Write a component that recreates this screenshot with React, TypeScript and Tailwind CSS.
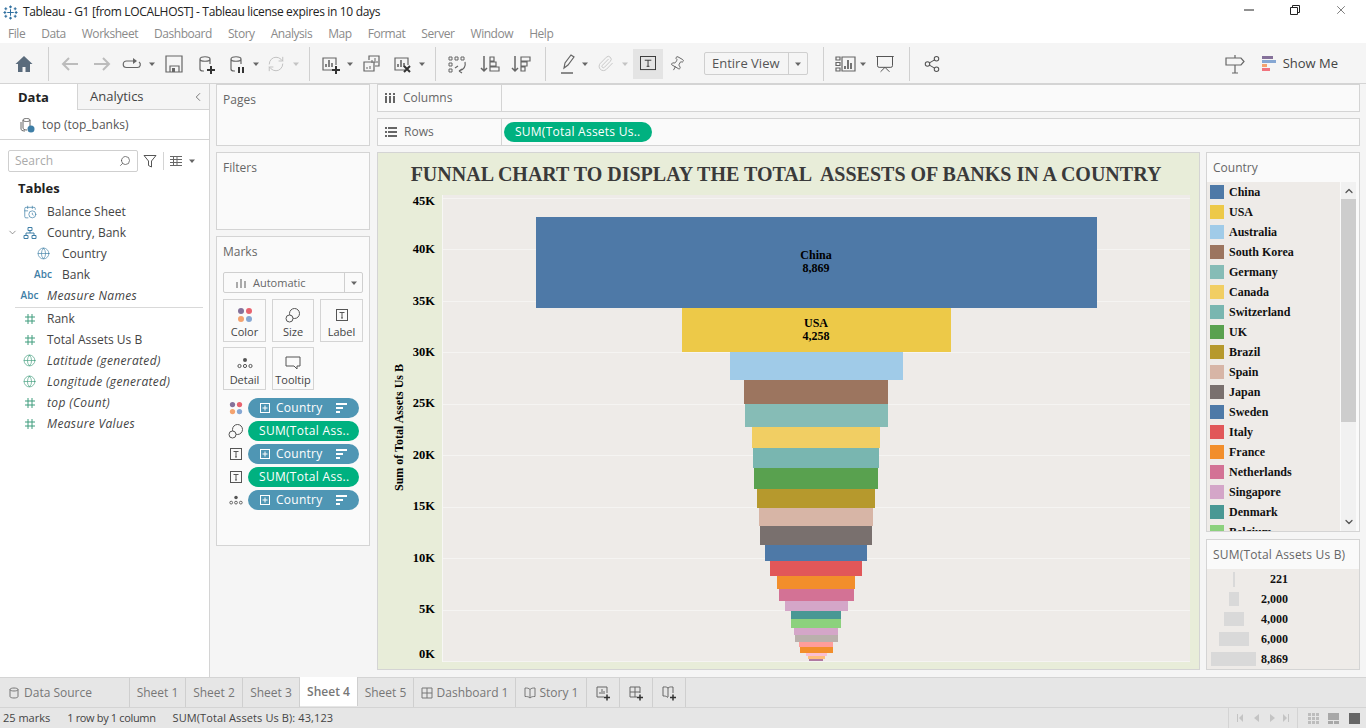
import { ReactNode } from "react"
import { CalendarClock, ChevronDown, ChevronLeft, ChevronUp, Globe, Paperclip, Pin, Presentation, RefreshCw, Search, Share2, X } from "lucide-react"

const bars = [
  { name: "China", bar: "w-[561px] h-[91px] pb-[2px] bg-[#4e79a7]", swatch: "bg-[#4e79a7]", value: "8,869" },
  { name: "USA", bar: "w-[269px] h-[44px] bg-[#edc948]", swatch: "bg-[#edc948]", value: "4,258" },
  { name: "Australia", bar: "w-[173px] h-[28px] bg-[#a0cbe8]", swatch: "bg-[#a0cbe8]" },
  { name: "South Korea", bar: "w-[144px] h-[24px] bg-[#9c755f]", swatch: "bg-[#9c755f]" },
  { name: "Germany", bar: "w-[143px] h-[23px] bg-[#86bcb6]", swatch: "bg-[#86bcb6]" },
  { name: "Canada", bar: "w-[128px] h-[21px] bg-[#f1ce63]", swatch: "bg-[#f1ce63]" },
  { name: "Switzerland", bar: "w-[126px] h-[20px] bg-[#79b6b0]", swatch: "bg-[#79b6b0]" },
  { name: "UK", bar: "w-[124px] h-[21px] bg-[#59a14f]", swatch: "bg-[#59a14f]" },
  { name: "Brazil", bar: "w-[118px] h-[19px] bg-[#b6992d]", swatch: "bg-[#b6992d]" },
  { name: "Spain", bar: "w-[114px] h-[18px] bg-[#d7b5a6]", swatch: "bg-[#d7b5a6]" },
  { name: "Japan", bar: "w-[112px] h-[19px] bg-[#79706e]", swatch: "bg-[#79706e]" },
  { name: "Sweden", bar: "w-[102px] h-[16px] bg-[#4e79a7]", swatch: "bg-[#4e79a7]" },
  { name: "Italy", bar: "w-[92px] h-[15px] bg-[#e15759]", swatch: "bg-[#e15759]" },
  { name: "France", bar: "w-[78px] h-[13px] bg-[#f28e2b]", swatch: "bg-[#f28e2b]" },
  { name: "Netherlands", bar: "w-[75px] h-[12px] bg-[#d37295]", swatch: "bg-[#d37295]" },
  { name: "Singapore", bar: "w-[63px] h-[10px] bg-[#d4a6c8]", swatch: "bg-[#d4a6c8]" },
  { name: "Denmark", bar: "w-[50px] h-[8px] bg-[#499894]", swatch: "bg-[#499894]" },
  { name: "Belgium", bar: "w-[50px] h-[9px] bg-[#8cd17d]", swatch: "bg-[#8cd17d]" },
  { name: "", bar: "w-[44px] h-[7px] bg-[#d4a6c8]", swatch: "" },
  { name: "", bar: "w-[43px] h-[7px] bg-[#bab0ac]", swatch: "" },
  { name: "", bar: "w-[34px] h-[5px] bg-[#ff9d9a]", swatch: "" },
  { name: "", bar: "w-[33px] h-[6px] bg-[#f28e2b]", swatch: "" },
  { name: "", bar: "w-[21px] h-[3px] bg-[#fabfd2]", swatch: "" },
  { name: "", bar: "w-[17px] h-[3px] bg-[#ffbe7d]", swatch: "" },
  { name: "", bar: "w-[14px] h-[2px] bg-[#b07aa1]", swatch: "" },
]

const ticks = [
  { label: "45K", nudge: "translate-y-[3px]" },
  { label: "40K", nudge: "" },
  { label: "35K", nudge: "" },
  { label: "30K", nudge: "" },
  { label: "25K", nudge: "" },
  { label: "20K", nudge: "" },
  { label: "15K", nudge: "" },
  { label: "10K", nudge: "" },
  { label: "5K", nudge: "" },
  { label: "0K", nudge: "-translate-y-[7px]" },
]

const sizeRows = [
  { value: "221", bar: "w-[2px] h-[15px]" },
  { value: "2,000", bar: "w-[10px] h-[14px]" },
  { value: "4,000", bar: "w-[20px] h-[14px]" },
  { value: "6,000", bar: "w-[30px] h-[14px]" },
  { value: "8,869", bar: "w-[45px] h-[14px]" },
]

const Svg = ({ children, className = "" }: { children: ReactNode; className?: string }) => (
  <svg viewBox="0 0 24 24" fill="none" stroke="#666" strokeWidth="1.2" className={`w-6 h-6 shrink-0 ${className}`}>
    {children}
  </svg>
)

const Sep = ({ className = "" }: { className?: string }) => (
  <div className={`w-px h-[34px] bg-[#d0d0d0] shrink-0 ${className}`} />
)

const Caret = ({ className = "", light = false }: { className?: string; light?: boolean }) => (
  <svg viewBox="0 0 8 8" className={`w-2 h-2 shrink-0 ${className}`}>
    <path d="M1 2.500h6L4 6z" fill={light ? "#c4c4c4" : "#666"} />
  </svg>
)

const Plus = ({ x, y }: { x: number; y: number }) => (
  <path d={`M${x - 4} ${y}h8M${x} ${y - 4}v8`} stroke="#333" strokeWidth="2" />
)

const Cylinder = () => (
  <path d="M7 7c0-3 10-3 10 0v5M7 7c0 3 10 3 10 0M7 7v10c0 1 1 2 3 2h1" />
)

const ChartBox = ({ mark }: { mark?: ReactNode }) => (
  <>
    <path d="M15 18H5V6h13v7" />
    <path d="M8 15v-3M11 15V8M14 15v-4" strokeWidth="1.6" />
    {mark}
  </>
)

const LabelIcon = ({ className = "" }: { className?: string }) => (
  <svg viewBox="0 0 14 14" fill="none" stroke="#555" className={`w-[14px] h-[14px] shrink-0 ${className}`}>
    <rect x="1.5" y="1.5" width="11" height="11" />
    <path d="M4.500 4.500h5M7 4.500v5.500M6 10h2" />
  </svg>
)

const ColorIcon = ({ className = "" }: { className?: string }) => (
  <svg viewBox="0 0 16 16" className={`w-4 h-4 shrink-0 ${className}`}>
    <circle cx="4" cy="4" r="3" fill="#85719a" />
    <circle cx="12" cy="4" r="3" fill="#e8636f" />
    <circle cx="4" cy="12" r="3" fill="#f4a36f" />
    <circle cx="12" cy="12" r="3" fill="#86a7d3" />
  </svg>
)

const SizeIcon = ({ className = "" }: { className?: string }) => (
  <svg viewBox="0 0 16 16" fill="none" stroke="#555" className={`w-4 h-4 shrink-0 ${className}`}>
    <circle cx="9.500" cy="6.500" r="5" />
    <circle cx="4.500" cy="11.500" r="3.500" fill="#fafafa" />
  </svg>
)

const DetailIcon = ({ className = "" }: { className?: string }) => (
  <svg viewBox="0 0 16 12" fill="none" stroke="#555" className={`w-4 h-3 shrink-0 ${className}`}>
    <circle cx="8" cy="3" r="2" fill="#555" stroke="none" />
    <circle cx="2.500" cy="9" r="1.600" />
    <circle cx="8" cy="9" r="1.600" />
    <circle cx="13.500" cy="9" r="1.600" />
  </svg>
)

const MarkButton = ({ icon, label, width = "w-[43px]" }: { icon: ReactNode; label: string; width?: string }) => (
  <div className={`${width} h-[43px] border border-[#d4d4d4] flex flex-col items-center`}>
    <div className="h-[25px] flex items-center justify-center pt-1">{icon}</div>
    <span className="text-[11px] leading-[14px] text-[#444]">{label}</span>
  </div>
)

const MarkPill = ({ icon, green, label }: { icon: ReactNode; green?: boolean; label: string }) => (
  <div className="flex items-center h-[20px]">
    <div className="w-[25px] flex justify-center pl-[1px]">{icon}</div>
    {green ? (
      <div className="w-[111px] h-[20px] rounded-full bg-[#00b180] text-white text-[12px] tracking-[0.3px] pl-[11px] flex items-center whitespace-nowrap">{label}</div>
    ) : (
      <div className="w-[111px] h-[20px] rounded-full bg-[#4f96b4] text-white text-[12px] tracking-[0.25px] flex items-center pl-[12px] pr-[12px]">
        <svg viewBox="0 0 10 10" fill="none" stroke="#fff" className="w-[10px] h-[10px] shrink-0">
          <rect x=".5" y=".5" width="9" height="9" />
          <path d="M2.500 5h5M5 2.500v5" />
        </svg>
        <span className="ml-[6px]">{label}</span>
        <svg viewBox="0 0 11 10" fill="#fff" className="w-[11px] h-[10px] ml-auto">
          <path d="M0 0h11v2H0zM0 4h7v2H0zM0 8h4v2H0z" />
        </svg>
      </div>
    )}
  </div>
)

const Hash = () => (
  <svg viewBox="0 0 12 12" fill="none" stroke="#3f9c7c" className="w-3 h-3">
    <path d="M4 1v10M8 1v10M1 4h10M1 8h10" />
  </svg>
)

const FieldRow = ({ icon, label, italic, sub }: { icon: ReactNode; label: string; italic?: boolean; sub?: boolean }) => (
  <div className={`flex items-center h-[21px] text-[12px] text-[#444] ${italic ? "italic tracking-[0.35px]" : ""}`}>
    <div className={`flex justify-center shrink-0 ${sub ? "w-[62px] pl-[24px] pr-[0px]" : "w-[47px] pl-[12px]"}`}>{icon}</div>
    <span className="whitespace-nowrap">{label}</span>
  </div>
)

const Abc = () => <span className="text-[10px] font-semibold tracking-normal text-[#3e7ea6] not-italic">Abc</span>

const Tab = ({ label, className = "", icon }: { label: string; className?: string; icon?: ReactNode }) => (
  <div className={`h-full border-r border-[#cfcfcf] flex items-center justify-center gap-[4px] text-[12px] text-[#777] whitespace-nowrap ${className}`}>
    {icon}
    {label}
  </div>
)

const TabAdd = ({ kind }: { kind: "sheet" | "dash" | "story" }) => (
  <div className="w-[33px] h-full border-r border-[#cfcfcf] flex items-center justify-center">
    <svg viewBox="0 0 16 16" fill="none" stroke="#666" className="w-4 h-4">
      {kind === "sheet" && <path d="M9 12H2V2h10v6M5 9V7M7 9V4M9 9V6" />}
      {kind === "dash" && <path d="M9 12H2V2h10v6M7 2v10M2 7h10" />}
      {kind === "story" && <path d="M7 3C5 1.500 4 2 2 2v9c2 0 3 0 5 1.500M7 3c2-1.500 3-1 5-1v6M7 3v9" />}
      <path d="M9 12.500h6M12 9.500v6" stroke="#333" strokeWidth="1.500" />
    </svg>
  </div>
)

const App = () => {
  return (
    <div className="w-[1366px] h-[728px] overflow-hidden flex flex-col bg-[#f5f5f5] font-['Open_Sans',sans-serif]">
      {/* title bar */}
      <div className="h-[24px] bg-white flex items-center shrink-0">
        <svg viewBox="0 0 16 16" stroke="#2f6f9f" fill="none" strokeWidth="1.100" className="w-[15px] h-[15px] ml-[3px]">
          <path d="M8 4.500v7M4.500 8h7M8 .5v3M6.500 2h3M8 12.500v3M6.500 14h3M.5 8h3M2 6.500v3M12.500 8h3M14 6.500v3M3 2.500v3M1.500 4h3M13 2.500v3M11.500 4h3M3 10.500v3M1.500 12h3M13 10.500v3M11.500 12h3" />
        </svg>
        <span className="ml-[5px] text-[12px] tracking-[-0.33px] text-[#222] whitespace-nowrap">Tableau - G1 [from LOCALHOST] - Tableau license expires in 10 days</span>
        <svg viewBox="0 0 10 10" stroke="#222" className="w-[10px] h-[10px] ml-auto -translate-y-[2px]">
          <path d="M0 5h10" />
        </svg>
        <svg viewBox="0 0 10 10" fill="none" stroke="#222" className="w-[10px] h-[10px] ml-[36px] -translate-y-[2px]">
          <path d="M.5 2.500h7v7h-7zM2.500 2.500v-2h7v7h-2" />
        </svg>
        <X size={14} strokeWidth={1} color="#222" className="ml-[34px] mr-[18px] -translate-y-[2px]" />
      </div>

      {/* menu bar */}
      <div className="h-[19px] bg-white flex items-center shrink-0 pl-[8px] text-[12px] tracking-[-0.45px] text-[#8a8a8a] gap-[16px]">
        {["File", "Data", "Worksheet", "Dashboard", "Story", "Analysis", "Map", "Format", "Server", "Window", "Help"].map((m) => (
          <span key={m}>{m}</span>
        ))}
      </div>

      {/* toolbar */}
      <div className="h-[41px] shrink-0 flex items-center pl-3 pr-[28px]">
        <Svg>
          <path d="M12 4L3.500 12H6v8h4.500v-5h3v5H18v-8h2.500z" fill="#5a6b7c" stroke="none" />
        </Svg>
        <Sep className="ml-3" />
        <Svg className="ml-[9px]">
          <path d="M20 12H5M11 6l-6 6 6 6" stroke="#bcbcbc" strokeWidth="2" />
        </Svg>
        <Svg className="ml-2">
          <path d="M4 12h15M13 6l6 6-6 6" stroke="#bcbcbc" strokeWidth="2" />
        </Svg>
        <Svg className="ml-[6px]">
          <path d="M14 9H6.500a3 3 0 0 0 0 6.500h11a3 3 0 0 0 1.500-5.500" />
          <path d="M13 6l4 3-4 3z" fill="#666" stroke="none" />
        </Svg>
        <Caret className="ml-1" />
        <Svg className="ml-[6px]">
          <path d="M4 4h16v16H4zM8 20v-6h9v6" />
          <path d="M10 16h3v4h-3z" fill="#666" stroke="none" />
        </Svg>
        <Svg className="ml-[7px]">
          <Cylinder />
          <Plus x={18} y={18} />
        </Svg>
        <Svg className="ml-[7px]">
          <Cylinder />
          <path d="M15 15v6M19 15v6" stroke="#333" strokeWidth="2" />
        </Svg>
        <Caret className="ml-1" />
        <div className="ml-1 w-6 flex justify-center">
          <RefreshCw size={18} strokeWidth={1.3} color="#c0c0c0" />
        </div>
        <Caret light className="ml-1" />
        <Sep className="ml-[9px]" />
        <Svg className="ml-2">
          <ChartBox mark={<Plus x={18} y={18} />} />
        </Svg>
        <Caret className="ml-1" />
        <Svg className="ml-[5px]">
          <path d="M10 8V4h10v10h-4M5 10h10v9H5z" />
          <path d="M13 11V8M16 11V6M18 11V9M8 17v-2M11 17v-3" strokeWidth="1" />
        </Svg>
        <Svg className="ml-[7px]">
          <ChartBox mark={<path d="M14 14l6 6M20 14l-6 6" stroke="#333" strokeWidth="2" />} />
        </Svg>
        <Caret className="ml-1" />
        <Sep className="ml-[9px]" />
        <Svg className="ml-[9px]">
          <path d="M4 5h3v3H4zM10 5h3v3h-3zM16 5h3v3h-3zM4 11h3v3H4zM4 17h3v3H4z" strokeWidth="1" />
          <path d="M20 10c1 4-1 8-6 9M14 19l3-2M14 19l3 2M10 16l3-2" />
        </Svg>
        <Svg className="ml-[9px]">
          <path d="M6 4v15M3 16l3 3 3-3" strokeWidth="1.500" />
          <path d="M12 5h4v4h-4zM12 10h6v4h-6zM12 15h9v4h-9z" />
        </Svg>
        <Svg className="ml-[7px]">
          <path d="M6 4v15M3 16l3 3 3-3" strokeWidth="1.500" />
          <path d="M12 5h9v4h-9zM12 10h6v4h-6zM12 15h4v4h-4z" />
        </Svg>
        <Sep className="ml-3" />
        <Svg className="ml-[10px]">
          <path d="M8 16l1-5 6-8 3 2-6 8zM8 16l4-3" />
          <path d="M5 21h12" strokeWidth="1.500" />
        </Svg>
        <Caret className="ml-[1px]" />
        <div className="ml-1 w-6 flex justify-center">
          <Paperclip size={17} strokeWidth={1.3} color="#c4c4c4" />
        </div>
        <Caret light className="ml-1" />
        <div className="ml-1 w-[30px] h-[30px] bg-[#e4e4e4] flex items-center justify-center">
          <svg viewBox="0 0 18 16" fill="none" stroke="#333" className="w-[17px] h-[15px]">
            <rect x=".5" y=".5" width="16" height="14" />
            <path d="M5 4.500h7M8.500 4.500v6.500M7 11h3" />
          </svg>
        </div>
        <div className="ml-[2px] w-6 flex justify-center">
          <Pin size={16} strokeWidth={1.2} color="#555" className="rotate-[30deg]" />
        </div>
        <div className="ml-[15px] w-[104px] h-[23px] border border-[#cfcfcf] rounded-[2px] flex items-center text-[13px] text-[#555]">
          <span className="w-[84px] pl-[7px] border-r border-[#cfcfcf] whitespace-nowrap leading-[21px]">Entire View</span>
          <Caret className="ml-[5px]" />
        </div>
        <Sep className="ml-[15px]" />
        <Svg className="ml-[10px]">
          <path d="M2 5h4v3H2zM2 10.500h4v3H2zM2 16h4v3H2zM8 5h13v14H8z" />
          <path d="M11 17v-3M14 17V8M17 17v-6" strokeWidth="1.800" />
        </Svg>
        <Caret className="ml-[1px]" />
        <div className="ml-[6px] w-6 flex justify-center">
          <Presentation size={20} strokeWidth={1.2} color="#555" />
        </div>
        <Sep className="ml-3" />
        <div className="ml-[10px] w-6 flex justify-center">
          <Share2 size={18} strokeWidth={1.4} color="#555" />
        </div>
        <Svg className="ml-auto">
          <path d="M3 6h15l3 3.500-3 3.500H3zM12 3v3M12 13v8M9 21h6" />
        </Svg>
        <svg viewBox="0 0 14 16" className="w-[14px] h-4 ml-[15px]">
          <path d="M0 0h11v3H0z" fill="#85719a" />
          <path d="M0 4h14v3H0z" fill="#86a7d3" />
          <path d="M0 8h5v3H0z" fill="#f4a36f" />
          <path d="M0 12h8v3H0z" fill="#f1747e" />
        </svg>
        <span className="ml-[7px] text-[13px] text-[#444] whitespace-nowrap">Show Me</span>
      </div>

      {/* main */}
      <div className="h-[594px] shrink-0 flex border-t border-[#d4d4d4] -mt-px">
        {/* data pane */}
        <div className="w-[210px] shrink-0 bg-white border-r border-[#d4d4d4]">
          <div className="h-[26px] flex text-[13px] text-[#444]">
            <div className="w-[77px] flex items-center pl-[18px] pt-[1px] font-bold text-[#222]">Data</div>
            <div className="flex-1 bg-[#f5f5f5] border-l border-b border-[#d4d4d4] flex items-center pl-[12px] pt-[1px]">
              Analytics
              <ChevronLeft size={14} strokeWidth={1.3} color="#555" className="ml-auto mr-[4px]" />
            </div>
          </div>
          <div className="h-[30px] border-b border-[#d4d4d4] flex items-center pl-[19px] pt-[1px] text-[12px] text-[#555]">
            <svg viewBox="0 0 16 16" fill="none" stroke="#666" className="w-4 h-4">
              <path d="M4 3c0-2 7-2 7 0v6M4 3c0 2 7 2 7 0M4 3v8c0 1 1 2 4 2M2 5v7c0 1 1 2 4 2" />
              <circle cx="12" cy="12" r="3.500" fill="#3e7ea6" stroke="none" />
            </svg>
            <span className="ml-[7px]">top (top_banks)</span>
          </div>
          <div className="h-[40px] flex items-center pl-[8px] pt-[1px]">
            <div className="w-[130px] h-[22px] border border-[#cfcfcf] rounded-[2px] flex items-center pl-[6px] text-[12px] text-[#aaa]">
              Search
              <Search size={12} strokeWidth={1.5} color="#555" className="ml-auto mr-[6px] -scale-x-100" />
            </div>
            <svg viewBox="0 0 14 14" fill="none" stroke="#555" className="w-[14px] h-[14px] ml-[5px]">
              <path d="M1 1.500h12L8.500 7v6l-3-1.500V7z" />
            </svg>
            <div className="w-px h-[18px] bg-[#d4d4d4] ml-[6px]" />
            <svg viewBox="0 0 12 10" fill="none" stroke="#666" className="w-3 h-[10px] ml-[6px]">
              <path d="M0 .5h12M0 3.500h12M0 6.500h12M0 9.500h12M3.500 0v10M7 0v10" />
            </svg>
            <Caret className="ml-[6px]" />
          </div>
          <div className="pl-[18px] h-[19px] flex items-center text-[13px] font-bold text-[#222] -mt-[1px]">Tables</div>
          <div className="mt-[3px]">
            <FieldRow icon={<CalendarClock size={14} strokeWidth={1.2} color="#3e7ea6" />} label="Balance Sheet" />
            <div className="relative">
              <ChevronDown size={11} strokeWidth={1.5} color="#666" className="absolute left-[7px] top-[5px]" />
              <FieldRow
                icon={
                  <svg viewBox="0 0 14 14" fill="none" stroke="#3e7ea6" className="w-[14px] h-[14px]">
                    <path d="M5 1.500h4v3H5zM1 9.500h4v3H1zM9 9.500h4v3H9zM7 4.500v2.500M3 9.500V7h8v2.500" />
                  </svg>
                }
                label="Country, Bank"
              />
            </div>
            <FieldRow sub icon={<Globe size={13} strokeWidth={1.2} color="#3e7ea6" />} label="Country" />
            <FieldRow sub icon={<Abc />} label="Bank" />
            <FieldRow italic icon={<Abc />} label="Measure Names" />
            <div className="h-px bg-[#d9d9d9] ml-[15px] mr-[6px] mt-[1px]" />
            <FieldRow icon={<Hash />} label="Rank" />
            <FieldRow icon={<Hash />} label="Total Assets Us B" />
            <FieldRow italic icon={<Globe size={13} strokeWidth={1.2} color="#3f9c7c" />} label="Latitude (generated)" />
            <FieldRow italic icon={<Globe size={13} strokeWidth={1.2} color="#3f9c7c" />} label="Longitude (generated)" />
            <FieldRow italic icon={<Hash />} label="top (Count)" />
            <FieldRow italic icon={<Hash />} label="Measure Values" />
          </div>
        </div>

        {/* cards column */}
        <div className="w-[154px] shrink-0 ml-[6px] flex flex-col gap-[6px] text-[12px] text-[#666]">
          <div className="h-[62px] border border-[#d4d4d4] bg-[#fafafa] pl-[6px] pt-[6px]">Pages</div>
          <div className="h-[78px] border border-[#d4d4d4] bg-[#fafafa] pl-[6px] pt-[6px]">Filters</div>
          <div className="h-[310px] border border-[#d4d4d4] bg-[#fafafa] px-[6px] pt-[6px]">
            <div>Marks</div>
            <div className="mt-[11px] h-[21px] border border-[#cfcfcf] rounded-[2px] flex items-center text-[11px] text-[#666]">
              <svg viewBox="0 0 10 10" fill="#aaa" className="w-[10px] h-[10px] ml-[12px]">
                <path d="M0 4h2v6H0zM4 1h2v9H4zM8 3h2v7H8z" />
              </svg>
              <span className="ml-[7px] pt-[1px]">Automatic</span>
              <div className="ml-auto w-[18px] h-full border-l border-[#cfcfcf] flex items-center justify-center">
                <Caret />
              </div>
            </div>
            <div className="mt-[6px] flex gap-x-[6px] gap-y-[5px] w-[140px] flex-wrap">
              <MarkButton icon={<ColorIcon />} label="Color" />
              <MarkButton width="w-[42px]" icon={<SizeIcon />} label="Size" />
              <MarkButton icon={<LabelIcon />} label="Label" />
              <MarkButton icon={<DetailIcon />} label="Detail" />
              <MarkButton width="w-[42px]" icon={<svg viewBox="0 0 16 16" fill="none" stroke="#555" className="w-4 h-4"><path d="M1 2h14v9h-3v3l-3-3H1z" /></svg>} label="Tooltip" />
            </div>
            <div className="mt-[8px] flex flex-col gap-[3px]">
              <MarkPill icon={<ColorIcon className="w-[14px] h-[14px]" />} label="Country" />
              <MarkPill green icon={<SizeIcon />} label="SUM(Total Ass.." />
              <MarkPill icon={<LabelIcon />} label="Country" />
              <MarkPill green icon={<LabelIcon />} label="SUM(Total Ass.." />
              <MarkPill icon={<DetailIcon className="w-[14px]" />} label="Country" />
            </div>
          </div>
        </div>

        {/* view column */}
        <div className="w-[983px] shrink-0 ml-[7px]">
          <div className="h-[28px] border border-[#d4d4d4] bg-[#fafafa] flex text-[12px] text-[#666]">
            <div className="w-[124px] border-r border-[#d4d4d4] flex items-center pl-[7px]">
              <svg viewBox="0 0 10 10" fill="#666" className="w-[10px] h-[10px]">
                <path d="M0 0h2v2H0zM4 0h2v2H4zM8 0h2v2H8zM0 3h2v7H0zM4 3h2v7H4zM8 3h2v7H8z" />
              </svg>
              <span className="ml-[8px]">Columns</span>
            </div>
          </div>
          <div className="h-[28px] mt-[6px] border border-[#d4d4d4] bg-[#fafafa] flex text-[12px] text-[#666]">
            <div className="w-[124px] border-r border-[#d4d4d4] flex items-center pl-[7px]">
              <svg viewBox="0 0 12 10" fill="#666" className="w-3 h-[10px]">
                <path d="M0 0h2v2H0zM3 0h9v2H3zM0 4h2v2H0zM3 4h9v2H3zM0 8h2v2H0zM3 8h9v2H3z" />
              </svg>
              <span className="ml-[7px]">Rows</span>
            </div>
            <div className="ml-[2px] flex items-center">
              <div className="w-[148px] h-[20px] rounded-full bg-[#00b180] text-white text-[12px] tracking-[0.25px] pl-[11px] flex items-center whitespace-nowrap">SUM(Total Assets Us..</div>
            </div>
          </div>

          <div className="mt-[6px] flex gap-[6px] h-[518px]">
            {/* chart */}
            <div className="w-[823px] shrink-0 border border-[#d4d4d4] bg-[#e8edd9] font-['Liberation_Serif',serif] font-bold text-black">
              <div className="h-[42px] flex items-center justify-center text-[20px] text-[#3a3a3a] whitespace-pre -ml-[5px]">FUNNAL CHART TO DISPLAY THE TOTAL  ASSESTS OF BANKS IN A COUNTRY</div>
              <div className="h-[467px] flex">
                <div className="w-[64px] shrink-0 flex">
                  <div className="w-[30px] flex items-center justify-end">
                    <span className="[writing-mode:vertical-rl] rotate-180 text-[12px] whitespace-nowrap -translate-y-[1px]">Sum of Total Assets Us B</span>
                  </div>
                  <div className="flex-1 flex flex-col justify-between items-end pt-[3px] pb-[1px] pr-[7px] text-[12.5px]">
                    {ticks.map((t) => (
                      <div key={t.label} className={`h-0 flex items-center ${t.nudge}`}>{t.label}</div>
                    ))}
                  </div>
                </div>
                <div className="relative w-[748px] bg-[#eeebe8] border-l border-[#f7f7f5]">
                  <div className="absolute inset-0 pt-[3px] flex flex-col justify-between">
                    {ticks.map((t) => (
                      <div key={t.label} className="h-px bg-[#f5f4f2]" />
                    ))}
                  </div>
                  <div className="relative flex flex-col items-center pt-[22px] pr-[1px]">
                    {bars.map((b, i) => (
                      <div key={i} className={`${b.bar} flex flex-col items-center justify-center text-[12px] leading-[13px] shrink-0`}>
                        {b.value && (
                          <>
                            <span>{b.name}</span>
                            <span>{b.value}</span>
                          </>
                        )}
                      </div>
                    ))}
                  </div>
                </div>
              </div>
            </div>

            {/* legends */}
            <div className="w-[154px] shrink-0 flex flex-col gap-[7px]">
              <div className="h-[380px] border border-[#d4d4d4] bg-[#fafafa] flex flex-col">
                <div className="h-[29px] shrink-0 flex items-center pl-[6px] text-[12px] text-[#666]">Country</div>
                <div className="flex-1 flex min-h-0">
                  <div className="w-[133px] bg-[#eeebe8] overflow-hidden pl-[3px] font-['Liberation_Serif',serif] font-bold text-[12px] text-[#111]">
                    {bars.filter((b) => b.name).map((b) => (
                      <div key={b.name} className="h-[20px] flex items-center shrink-0">
                        <div className={`w-[14px] h-[14px] ${b.swatch}`} />
                        <span className="ml-[5px]">{b.name}</span>
                      </div>
                    ))}
                  </div>
                  <div className="w-[15px] ml-[1px] bg-[#f1f1f1] flex flex-col items-center">
                    <ChevronUp size={12} strokeWidth={2.5} color="#555" className="mt-[3px]" />
                    <div className="w-full h-[223px] bg-[#cdcdcd] mt-[2px]" />
                    <ChevronDown size={12} strokeWidth={2.5} color="#555" className="mt-auto mb-[3px]" />
                  </div>
                </div>
              </div>
              <div className="h-[131px] border border-[#d4d4d4] bg-[#fafafa] flex flex-col">
                <div className="h-[29px] shrink-0 flex items-center pl-[6px] text-[12px] tracking-[0.18px] text-[#666] whitespace-nowrap">SUM(Total Assets Us B)</div>
                <div className="flex-1 bg-[#eeebe8] font-['Liberation_Serif',serif] font-bold text-[12px] text-[#111]">
                  {sizeRows.map((r) => (
                    <div key={r.value} className="h-[20px] flex items-center">
                      <div className="w-[53px] flex justify-center">
                        <div className={`${r.bar} bg-[#d9d9d9]`} />
                      </div>
                      <span className="w-[28px] text-right">{r.value}</span>
                    </div>
                  ))}
                </div>
              </div>
            </div>
          </div>
        </div>
      </div>

      {/* sheet tabs */}
      <div className="h-[30px] shrink-0 bg-[#e6e6e6] border-t border-[#d4d4d4] flex">
        <Tab
          label="Data Source"
          className="w-[130px] justify-start pl-[9px]"
          icon={
            <svg viewBox="0 0 10 12" fill="none" stroke="#777" className="w-[10px] h-3 mr-[1px]">
              <path d="M1 2.500c0-2 8-2 8 0v7c0 2-8 2-8 0zM1 2.500c0 2 8 2 8 0" />
            </svg>
          }
        />
        <Tab label="Sheet 1" className="w-[56px]" />
        <Tab label="Sheet 2" className="w-[57px]" />
        <Tab label="Sheet 3" className="w-[57px]" />
        <Tab label="Sheet 4" className="w-[58px] bg-white text-[#333] font-semibold -mt-px" />
        <Tab label="Sheet 5" className="w-[56px]" />
        <Tab
          label="Dashboard 1"
          className="w-[102px]"
          icon={
            <svg viewBox="0 0 12 12" fill="none" stroke="#777" className="w-3 h-3">
              <path d="M1 1h10v10H1zM6 1v10M1 6h10" />
            </svg>
          }
        />
        <Tab
          label="Story 1"
          className="w-[71px]"
          icon={
            <svg viewBox="0 0 12 12" fill="none" stroke="#777" className="w-3 h-3">
              <path d="M6 2.500C4.500 1 3 1 1 1v8.500c2 0 3.500 0 5 1.500 1.500-1.500 3-1.500 5-1.500V1C9 1 7.500 1 6 2.500zM6 2.500V11" />
            </svg>
          }
        />
        <TabAdd kind="sheet" />
        <TabAdd kind="dash" />
        <TabAdd kind="story" />
      </div>

      {/* status bar */}
      <div className="flex-1 bg-[#e6e6e6] border-t border-[#d4d4d4] flex items-center text-[11px] text-[#444] pl-[3px]">
        <span>25 marks</span>
        <span className="ml-[17px] tracking-[-0.35px]">1 row by 1 column</span>
        <span className="ml-[17px] tracking-[0.1px]">SUM(Total Assets Us B): 43,123</span>
        <div className="ml-auto h-full w-[70px] border-l border-r border-[#d4d4d4] flex items-center justify-center gap-[8px] mr-[10px]">
          <svg viewBox="0 0 52 8" fill="#c4c4c4" className="w-[52px] h-2">
            <path d="M0 0h1v8H0zM6 0v8L2 4zM22 0v8l-5-4zM33 0v8l5-4zM46 0v8l4-4zM51 0h1v8h-1z" />
          </svg>
        </div>
        <svg viewBox="0 0 56 14" className="w-[56px] h-[14px] mr-[2px]">
          <path d="M0 2h3v3H0zM4 2h3v3H4zM8 2h3v3H8zM0 6h3v3H0zM4 6h3v3H4zM8 6h3v3H8zM0 10h3v3H0zM4 10h3v3H4zM8 10h3v3H8z" fill="#bdbdbd" />
          <path d="M20 2h11v7H20zM20 10h5v3h-5zM26 10h5v3h-5z" fill="#a8a8a8" />
          <path d="M41 2h11v11H41z" fill="#666" />
        </svg>
      </div>
    </div>
  )
}

export default App
